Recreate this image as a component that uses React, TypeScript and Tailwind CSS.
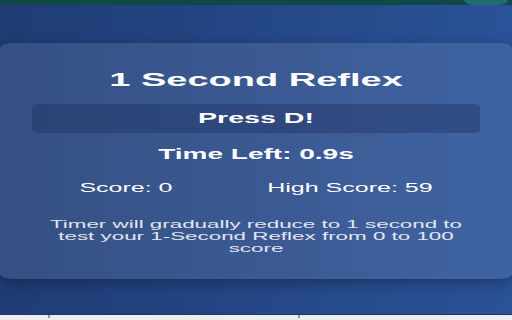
export default function App() {
  return (
    <div className="w-[512px] h-[320px] overflow-hidden bg-[#eeeeee]">
      {/* whole page is drawn at half width and stretched, like the screenshot */}
      <div
        className="w-[256px] h-[320px] origin-left scale-x-200 flex flex-col"
        style={{ fontFamily: '"Liberation Sans", Arial, sans-serif' }}
      >
        <div className="h-[5px] bg-[#104848] flex justify-end">
          <div className="w-[22px] h-[5px] mr-[2px] rounded-b-full bg-[#1f6d6d]" />
        </div>

        <div className="h-[310px] bg-gradient-to-r from-[#1f3c74] to-[#2a5298] border-b border-[#1a3768] pt-[38px]">
          <div className="rounded-[6px] bg-white/10 shadow-[0_4px_10px_rgba(0,0,0,0.3)] px-4 pt-[26px] pb-[25px] text-center text-white">
            <h1 className="text-[19px] leading-[22px] font-bold">1 Second Reflex</h1>

            <div className="mt-[13px] h-[29px] rounded-[3px] bg-[#1e3060]/40 flex items-center justify-center text-[14.3px] font-bold">
              Press D!
            </div>

            <p className="mt-3 text-[14px] leading-[18px] font-bold">Time Left: 0.9s</p>

            <div className="mt-[17px] flex justify-around text-[12.5px] leading-4">
              <span>Score: 0</span>
              <span>High Score: 59</span>
            </div>

            <p className="mt-[22px] px-[6px] text-[11.2px] leading-3 text-white/85">
              Timer will gradually reduce to 1 second to test your 1-Second Reflex from 0 to 100 score
            </p>
          </div>
        </div>

        <div className="relative flex-1 bg-[#eeeeee]">
          <div className="absolute left-[23.5px] top-0 w-[0.5px] h-[3px] bg-[#999999]" />
          <div className="absolute left-[148.5px] top-0 w-[0.5px] h-[3px] bg-[#999999]" />
        </div>
      </div>
    </div>
  )
}
